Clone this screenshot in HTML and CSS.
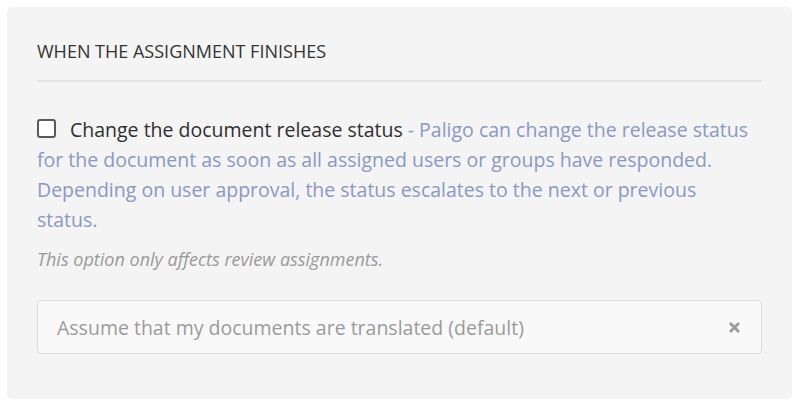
FILE: index.html
```html
<!DOCTYPE html>
<html>
<head>
<meta charset="utf-8">
<link rel="stylesheet" href="styles.css">
</head>
<body>
<section class="panel">
  <h2 class="panel-title">When the assignment finishes</h2>
  <div class="divider"></div>
  <p class="option"><span class="checkbox"></span><span class="option-label">Change the document release status</span> - Paligo can change the release status for the document as soon as all assigned users or groups have responded. Depending on user approval, the status escalates to the next or previous status.</p>
  <p class="note">This option only affects review assignments.</p>
  <div class="select">
    <span class="select-text">Assume that my documents are translated (default)</span>
    <svg class="clear" width="13" height="13" viewBox="0 0 13 13"><path d="M2 2 L11 11 M11 2 L2 11" stroke="#9a9a9a" stroke-width="2.8" stroke-linecap="butt"/></svg>
  </div>
</section>
</body>
</html>
```
FILE: styles.css
```css
html, body {
  margin: 0;
  padding: 0;
  background: #ffffff;
}
body {
  font-family: "Open Sans", "Noto Sans", sans-serif;
  width: 800px;
  height: 408px;
  overflow: hidden;
}
.panel {
  margin: 7px 8px 0 7px;
  height: 392px;
  box-sizing: border-box;
  background: #f4f4f4;
  border-radius: 5px;
  padding: 32px 30px 0 30px;
}
.panel-title {
  margin: 0 0 17px 0;
  font-size: 18px;
  line-height: 24px;
  font-weight: 400;
  text-transform: uppercase;
  color: #333333;
  letter-spacing: 0;
}
.divider {
  height: 2px;
  background: #e5e5e5;
}
.option {
  margin: 33px 0 0 0;
  padding-right: 12px;
  font-size: 19.5px;
  line-height: 30px;
  color: #8a98c6;
}
.checkbox {
  display: inline-block;
  width: 15px;
  height: 15px;
  border: 2px solid #5a5a5a;
  border-radius: 3px;
  background: #ffffff;
  vertical-align: -1px;
  margin-right: 14px;
}
.option-label {
  color: #2f2f2f;
}
.note {
  margin: 12px 0 0 0;
  font-size: 18px;
  line-height: 24px;
  font-style: italic;
  color: #9a9a9a;
}
.select {
  margin-top: 29px;
  height: 54px;
  box-sizing: border-box;
  border: 1px solid #dcdcdc;
  border-radius: 4px;
  background: #f9f9f9;
  display: flex;
  align-items: center;
  justify-content: space-between;
  padding: 0 20px 0 19px;
}
.select-text {
  font-size: 19.5px;
  color: #9b9b9b;
}
.clear {
  display: block;
}
```
